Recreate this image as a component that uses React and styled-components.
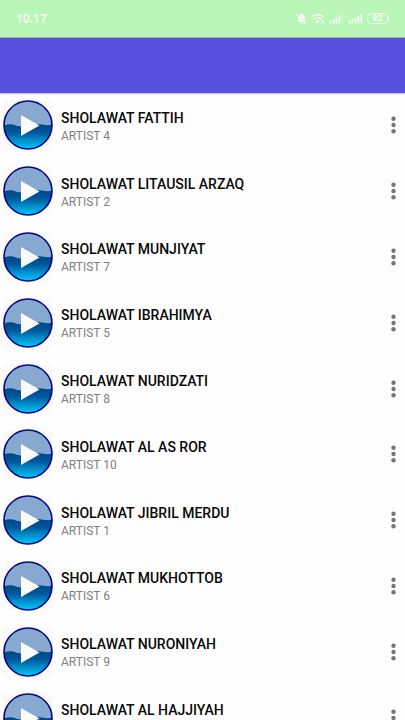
import React from "react";
import styled, { createGlobalStyle } from "styled-components";

const GlobalStyle = createGlobalStyle`
  * { box-sizing: border-box; }
  body { margin: 0; background: #fefefe; font-family: Roboto, "Noto Sans", sans-serif; }
`;

const Screen = styled.div`
  display: flex;
  flex-direction: column;
  height: 100vh;
  overflow: hidden;
`;

const StatusBar = styled.div`
  display: flex;
  flex: none;
  align-items: center;
  justify-content: space-between;
  height: 38px;
  padding: 0 16px;
  background: #b9f5b7;
  border-bottom: 1px solid #a9b59a;
  color: #f4fff2;
`;

const Clock = styled.time`
  font: 600 12px/16px "Noto Sans", sans-serif;
`;

const StatusIcons = styled.div`
  display: flex;
  align-items: center;
  gap: 4px;
`;

const StatusIcon = styled.svg`
  display: block;
  fill: currentColor;
`;

const Battery = styled.span`
  display: flex;
  align-items: center;
  justify-content: center;
  position: relative;
  width: 21px;
  height: 11px;
  margin-right: 1px;
  border: 1px solid currentColor;
  border-radius: 4px;
  font: 700 9px/9px Roboto, sans-serif;

  &::after {
    content: "";
    position: absolute;
    right: -2px;
    width: 1px;
    height: 4px;
    background: currentColor;
  }
`;

const AppBar = styled.header`
  flex: none;
  height: 55px;
  background: #5652df;
  box-shadow: 0 1px 1px #c9c8ee;
`;

const SongList = styled.ul`
  display: grid;
  flex: 1;
  grid-auto-rows: 1fr;
  min-height: 658px;
  margin: 0;
  padding: 0;
  list-style: none;
`;

const SongRow = styled.li`
  display: flex;
  align-items: center;
  gap: 8px;
  padding: 0 0 1px 3px;
`;

const PlayButton = styled.button`
  flex: none;
  width: 50px;
  height: 50px;
  padding: 0;
  border: 0;
  border-radius: 4px;
  background: #fafafa;
  cursor: pointer;

  svg { display: block; width: 100%; height: 100%; }
`;

const SongText = styled.div`
  flex: 1;
  min-width: 0;
  padding-top: 3px;
`;

const Title = styled.div`
  color: #080808;
  font-size: 14px;
  font-weight: 500;
  line-height: 18px;
`;

const Artist = styled.div`
  color: #808080;
  font-size: 12px;
  line-height: 18px;
`;

const MenuButton = styled.button`
  display: flex;
  flex: none;
  align-items: center;
  justify-content: center;
  width: 23px;
  height: 40px;
  padding: 0;
  border: 0;
  background: transparent;
  color: #757575;
  cursor: pointer;
`;

const songs = [
  ["SHOLAWAT FATTIH", 4],
  ["SHOLAWAT LITAUSIL ARZAQ", 2],
  ["SHOLAWAT MUNJIYAT", 7],
  ["SHOLAWAT IBRAHIMYA", 5],
  ["SHOLAWAT NURIDZATI", 8],
  ["SHOLAWAT AL AS ROR", 10],
  ["SHOLAWAT JIBRIL MERDU", 1],
  ["SHOLAWAT MUKHOTTOB", 6],
  ["SHOLAWAT NURONIYAH", 9],
  ["SHOLAWAT AL HAJJIYAH", 3],
];

function PlayIcon({ id }) {
  const base = `base-${id}`;
  return (
    <svg viewBox="0 0 50 50" aria-hidden="true">
      <defs>
        <linearGradient id={base} x1="0" y1="0" x2="0" y2="1">
          <stop offset="0.45" stopColor="#004585" />
          <stop offset="0.65" stopColor="#005599" />
          <stop offset="0.82" stopColor="#0090cc" />
          <stop offset="1" stopColor="#00c8fa" />
        </linearGradient>
      </defs>
      <circle cx="25" cy="25" r="24" fill={`url(#${base})`} />
      <path d="M1 25.500A24 24 0 0 1 49 24.500C43 27 38 22.500 30 24.500C23 26 19 28 13 25.500C9 23.500 5 24 1 25.500Z" fill="#87a8cf" />
      <circle cx="25" cy="25" r="24" fill="none" stroke="#070784" strokeWidth="1.6" />
      <path d="M18 15L36.500 25.500L18 36Z" fill="#fafafa" />
    </svg>
  );
}

function Signal({ faded }) {
  return (
    <StatusIcon width="15" height="11" viewBox="0 0 15 11" aria-hidden="true">
      <rect x="0.500" y="7.500" width="1.700" height="3" rx="0.5" />
      <rect x="3.500" y="6" width="1.700" height="4.500" rx="0.5" />
      <rect x="6.500" y="4.500" width="1.700" height="6" rx="0.5" />
      <rect x="9.500" y="2.500" width="1.700" height="8" rx="0.5" />
      <rect x="12.500" y="0.500" width="1.700" height="10" rx="0.5" opacity={faded ? 0.3 : 1} />
    </StatusIcon>
  );
}

export default function App() {
  return (
    <Screen>
      <GlobalStyle />
      <StatusBar>
        <Clock>10.17</Clock>
        <StatusIcons>
          <StatusIcon width="11" height="12" viewBox="0 0 11 12" aria-hidden="true">
            <path d="M5.500 0.500C6.200 .5 6.500 1 6.500 1.600C8.300 2 9 3.500 9 5V7.500L10 9H1L2 7.500V5C2 3.500 2.800 2 4.500 1.600C4.500 1 4.800 .5 5.500 .5ZM4 9.700H7C6.800 11.300 4.200 11.300 4 9.700Z" />
            <path d="M1.500 .7L10.800 10" stroke="#b9f5b7" strokeWidth="0.700" />
            <path d="M.7 1.300L10 10.800" stroke="currentColor" strokeWidth="1.100" />
          </StatusIcon>
          <StatusIcon width="14" height="12" viewBox="0 0 14 12" aria-hidden="true">
            <g fill="none" stroke="currentColor" strokeWidth="1.500">
              <path d="M.7 4C4 .7 9.300 .7 12.600 4M2.800 6.300C5 4.200 8.300 4.200 10.400 6.300" />
            </g>
            <path d="M4.300 8C5.700 6.800 7.500 6.800 8.900 8L6.600 10.800ZM11.500 6.700L13.200 8.500H9.800ZM11.500 11.300L9.800 9.500H13.200Z" />
          </StatusIcon>
          <Signal faded />
          <Signal />
          <Battery>92</Battery>
        </StatusIcons>
      </StatusBar>
      <AppBar />
      <SongList>
        {songs.map(([title, artist]) => (
          <SongRow key={title}>
            <PlayButton aria-label={`Play ${title}`}>
              <PlayIcon id={artist} />
            </PlayButton>
            <SongText>
              <Title>{title}</Title>
              <Artist>ARTIST {artist}</Artist>
            </SongText>
            <MenuButton aria-label={`Options for ${title}`}>
              <svg width="5" height="18" viewBox="0 0 5 18" fill="currentColor" aria-hidden="true">
                <circle cx="2.500" cy="2.700" r="2.200" />
                <circle cx="2.500" cy="9" r="2.200" />
                <circle cx="2.500" cy="15.300" r="2.200" />
              </svg>
            </MenuButton>
          </SongRow>
        ))}
      </SongList>
    </Screen>
  );
}
